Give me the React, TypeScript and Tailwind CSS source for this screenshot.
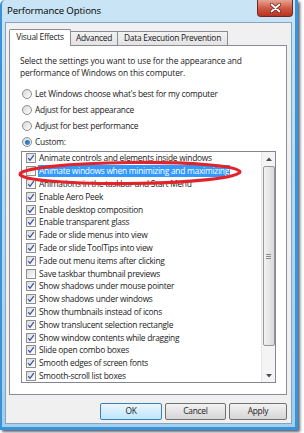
import React from "react";

const items: [string, boolean][] = [
  ["Animate controls and elements inside windows", true],
  ["Animate windows when minimizing and maximizing", false],
  ["Animations in the taskbar and Start Menu", true],
  ["Enable Aero Peek", true],
  ["Enable desktop composition", true],
  ["Enable transparent glass", true],
  ["Fade or slide menus into view", true],
  ["Fade or slide ToolTips into view", true],
  ["Fade out menu items after clicking", true],
  ["Save taskbar thumbnail previews", false],
  ["Show shadows under mouse pointer", true],
  ["Show shadows under windows", true],
  ["Show thumbnails instead of icons", true],
  ["Show translucent selection rectangle", true],
  ["Show window contents while dragging", true],
  ["Slide open combo boxes", true],
  ["Smooth edges of screen fonts", true],
  ["Smooth-scroll list boxes", true],
];

function Check({ on }: { on: boolean }) {
  return (
    <div className="w-[10px] h-[10px] shrink-0 border border-[#8f8f8f] bg-gradient-to-br from-[#dcdcdc] to-[#ffffff] flex items-center justify-center">
      {on && (
        <svg width="8" height="8" viewBox="0 0 8 8">
          <path d="M1.2 4.2 L3 6.3 L6.8 1.2" fill="none" stroke="#2f4f9e" strokeWidth="1.2" />
        </svg>
      )}
    </div>
  );
}

function Radio({ on, label }: { on: boolean; label: string }) {
  return (
    <div className="h-[16px] flex items-center gap-[3px]">
      <div className="w-[10px] h-[10px] rounded-full border border-[#8f8f8f] bg-gradient-to-br from-[#d6d6d6] to-[#ffffff] flex items-center justify-center">
        {on && <div className="w-[5px] h-[5px] rounded-full bg-gradient-to-br from-[#1a5ea8] to-[#4aa0e6]" />}
      </div>
      <span>{label}</span>
    </div>
  );
}

function Btn({ label, def }: { label: string; def?: boolean }) {
  return (
    <div
      className={
        "h-[17px] flex items-center justify-center rounded-[2px] border " +
        (def
          ? "border-[#3c7fb1] bg-gradient-to-b from-[#eaf6fd] to-[#bee6fd]"
          : "border-[#707070] bg-gradient-to-b from-[#f2f2f2] to-[#d5d5d5]")
      }
    >
      {label}
    </div>
  );
}

export default function App() {
  return (
    <div
      className="w-[304px] h-[433px] bg-white text-[8.4px] tracking-[-0.25px] text-[#1a1a1a] overflow-hidden"
      style={{ fontFamily: '"Open Sans", "Noto Sans", sans-serif' }}
    >
      <div className="relative w-[298px] h-[430px] flex flex-col bg-gradient-to-b from-[#c9e4f5] via-[#b4d8ef] to-[#a3cfec] border-l-[2px] border-r-[3px] border-b-[3px] border-[#3a93d8] rounded-tl-[5px] shadow-[2px_2px_3px_rgba(20,30,50,0.7)]">
        {/* Title bar */}
        <div className="h-[22px] flex items-start justify-between">
          <div className="pl-[5px] pt-[4px] text-[9.6px] tracking-[-0.1px] text-black leading-[14px]">Performance Options</div>
          <div className="mr-[2px] w-[36px] h-[17px] rounded-b-[4px] border border-t-0 border-[#6e2a22] bg-gradient-to-b from-[#e7a393] via-[#cf5a44] to-[#b9321f] flex items-center justify-center">
            <svg width="11" height="10" viewBox="0 0 11 10">
              <path d="M1.5 1.5 L9.5 8.5 M9.5 1.5 L1.5 8.5" stroke="#5a2018" strokeWidth="3.2" strokeLinecap="round" />
              <path d="M1.5 1.5 L9.5 8.5 M9.5 1.5 L1.5 8.5" stroke="#ffffff" strokeWidth="1.8" strokeLinecap="round" />
            </svg>
          </div>
        </div>
        {/* Client */}
        <div className="ml-[3px] w-[287px] h-[402px] bg-[#f0f0f0] border border-[#87a3bd] flex flex-col">
          {/* tabs */}
          <div className="pl-[3px] pt-[5px] flex items-end h-[22px] relative z-10 whitespace-nowrap">
            <div className="w-[62px] h-[17px] -mb-[1px] bg-white border border-[#898c95] border-b-0 rounded-t-[2px] flex items-center justify-center pb-[1px]">
              Visual Effects
            </div>
            <div className="w-[47px] h-[14px] border border-[#898c95] border-l-0 border-b-0 bg-gradient-to-b from-[#f2f2f2] to-[#e3e3e3] flex items-center justify-center">
              Advanced
            </div>
            <div className="w-[110px] h-[14px] border border-[#898c95] border-l-0 border-b-0 bg-gradient-to-b from-[#f2f2f2] to-[#e3e3e3] flex items-center justify-center">
              Data Execution Prevention
            </div>
          </div>
          {/* panel */}
          <div className="ml-[3px] w-[278px] h-[350px] bg-white border border-[#898c95] flex flex-col">
            <div className="pl-[10px] pt-[9px] leading-[12px] tracking-[-0.12px]">
              <div>Select the settings you want to use for the appearance and</div>
              <div>performance of Windows on this computer.</div>
            </div>
            <div className="pl-[12px] mt-[7px] flex flex-col">
              <Radio on={false} label="Let Windows choose what's best for my computer" />
              <Radio on={false} label="Adjust for best appearance" />
              <Radio on={false} label="Adjust for best performance" />
              <Radio on={true} label="Custom:" />
            </div>
            {/* listbox */}
            <div className="relative ml-[11px] mt-[1px] w-[255px] h-[232px] border border-[#828790] flex">
              <div className="flex-1 flex flex-col overflow-hidden">
                {items.map(([t, on], i) => (
                  <div key={i} className="h-[12.8px] shrink-0 flex items-center pl-[4px] gap-[2px]">
                    <Check on={on} />
                    <span
                      className={
                        "leading-[12px] px-[1px] whitespace-nowrap " +
                        (i === 1 ? "bg-[#3399ff] text-white" : "")
                      }
                    >
                      {t}
                    </span>
                  </div>
                ))}
              </div>
              {/* scrollbar */}
              <div className="w-[14px] h-full bg-[#f4f4f4] border-l border-[#e6e6e6] flex flex-col items-center">
                <div className="h-[13px] flex items-center justify-center">
                  <svg width="6" height="4" viewBox="0 0 6 4">
                    <path d="M0 4 L3 0.5 L6 4 Z" fill="#4d4d4d" />
                  </svg>
                </div>
                <div className="mt-[1px] w-[12px] h-[180px] rounded-[2px] border border-[#979797] bg-gradient-to-r from-[#f3f3f3] to-[#d9d9d9] flex items-center justify-center">
                  <div className="flex flex-col gap-[1px]">
                    <div className="w-[5px] h-[1px] bg-[#8a8a8a]" />
                    <div className="w-[5px] h-[1px] bg-[#8a8a8a]" />
                    <div className="w-[5px] h-[1px] bg-[#8a8a8a]" />
                  </div>
                </div>
                <div className="flex-1" />
                <div className="h-[13px] flex items-center justify-center">
                  <svg width="6" height="4" viewBox="0 0 6 4">
                    <path d="M0 0 L3 3.5 L6 0 Z" fill="#4d4d4d" />
                  </svg>
                </div>
              </div>
              {/* red ellipse annotation */}
              <svg
                className="absolute left-[-5px] top-[8px] pointer-events-none"
                width="228"
                height="28"
                viewBox="0 0 228 28"
              >
                <ellipse cx="113" cy="13" rx="110" ry="10.5" fill="none" stroke="#e3232a" strokeWidth="3.2" transform="rotate(-0.6 113 13)" />
              </svg>
            </div>
          </div>
          {/* buttons */}
          <div className="mt-[8px] pl-[94px] flex gap-[3px]">
            <div className="w-[62px]"><Btn label="OK" def /></div>
            <div className="w-[61px]"><Btn label="Cancel" /></div>
            <div className="w-[58px]"><Btn label="Apply" /></div>
          </div>
        </div>
      </div>
    </div>
  );
}
